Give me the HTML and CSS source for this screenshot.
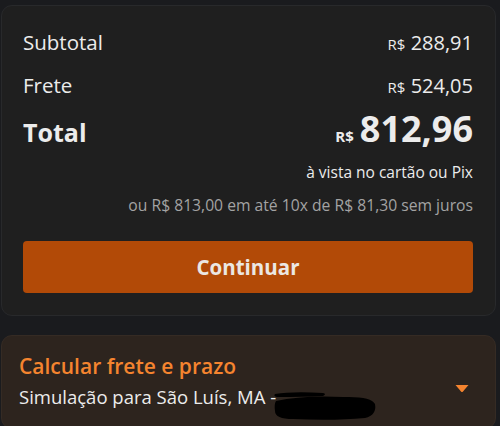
FILE: index.html
```html
<!DOCTYPE html>
<html lang="pt-BR">
<head>
<meta charset="utf-8">
<link rel="stylesheet" href="styles.css">
</head>
<body>
<div class="page">
  <section class="summary">
    <div class="row">
      <span class="label">Subtotal</span>
      <span class="value"><span class="cur">R$</span> 288,91</span>
    </div>
    <div class="row">
      <span class="label">Frete</span>
      <span class="value"><span class="cur">R$</span> 524,05</span>
    </div>
    <div class="row total">
      <span class="label">Total</span>
      <span class="value"><span class="cur">R$</span>812,96</span>
    </div>
    <p class="cash">à vista no cartão ou Pix</p>
    <p class="install">ou R$ 813,00 em até 10x de R$ 81,30 sem juros</p>
    <button class="btn">Continuar</button>
  </section>
  <section class="shipping">
    <div class="ship-text">
      <div class="ship-title">Calcular frete e prazo</div>
      <div class="ship-sub">Simulação para São Luís, MA -<svg class="redact" width="104" height="30" viewBox="0 0 104 30"><path d="M2 3 Q20 0 50 2 Q54 3 50 5 Q30 6 4 6 Q0 5 2 3 Z" fill="#000"/><path d="M3 10 Q30 4 70 6 Q98 5 102 13 Q104 24 92 27 Q60 30 20 28 Q2 28 2 20 Q1 13 3 10 Z" fill="#000"/></svg></div>
    </div>
    <svg class="caret" width="14" height="9" viewBox="0 0 14 9"><path d="M0.5 1 H13.5 L8 7.6 Q7 8.6 6 7.6 Z" fill="#f5842f"/></svg>
  </section>
</div>
</body>
</html>
```
FILE: styles.css
```css
html, body {
  margin: 0;
  padding: 0;
  background: #1a1b1e;
}
body {
  font-family: "Open Sans", "Noto Sans", sans-serif;
  color: #ececec;
}
.page {
  padding: 5px 4px 0 1px;
  display: flex;
  flex-direction: column;
  gap: 19px;
}
.summary {
  background: #1f1f1f;
  border: 1px solid #28292b;
  border-radius: 11px;
  padding: 15px 22px 22px 21px;
  display: flex;
  flex-direction: column;
}
.row {
  display: flex;
  justify-content: space-between;
  align-items: baseline;
  line-height: 43px;
  font-size: 20.5px;
}
.value {
  font-size: 20px;
}
.cur {
  font-size: 15px;
  line-height: 1;
}
.total {
  line-height: 43px;
}
.total .label {
  font-size: 25px;
  font-weight: 700;
}
.total .value {
  font-size: 36px;
  font-weight: 700;
}
.total .cur {
  font-size: 15px;
  margin-right: 6px;
}
.cash {
  margin: 8px 0 0;
  text-align: right;
  font-size: 15.5px;
  line-height: 20px;
}
.install {
  margin: 13px 0 0;
  text-align: right;
  font-size: 15.7px;
  line-height: 20px;
  color: #a3a3a3;
}
.btn {
  margin-top: 26px;
  height: 52px;
  border: none;
  border-radius: 4px;
  background: #b24a07;
  color: #ebe7e3;
  font-family: inherit;
  font-size: 20.5px;
  font-weight: 700;
}
.shipping {
  background: #2d241e;
  border: 1px solid #352b24;
  border-radius: 11px;
  padding: 16px 26px 15px 17px;
  display: flex;
  align-items: center;
  justify-content: space-between;
}
.ship-title {
  color: #f5842f;
  font-size: 21px;
  font-weight: 600;
  line-height: 28px;
}
.ship-sub {
  margin-top: 4px;
  font-size: 18.5px;
  line-height: 26px;
}
.redact {
  display: inline-block;
  vertical-align: -9px;
  margin: -8px 0 -8px -3px;
}
.caret {
  display: block;
  margin-top: 12px;
}
```
